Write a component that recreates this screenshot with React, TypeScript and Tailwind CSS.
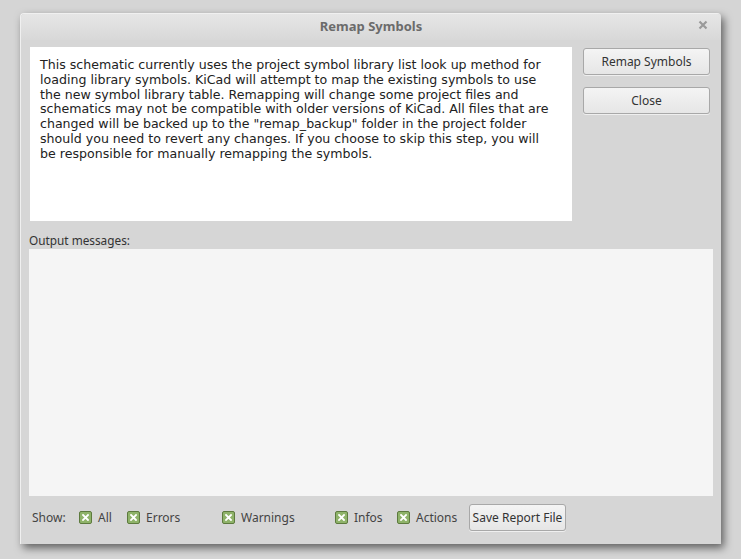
import React from "react";

const filters = [
  { label: "All", w: "w-[48px]" },
  { label: "Errors", w: "w-[95px]" },
  { label: "Warnings", w: "w-[113px]" },
  { label: "Infos", w: "w-[62px]" },
  { label: "Actions", w: "w-[72px]" },
];

const message = [
  "This schematic currently uses the project symbol library list look up method for",
  "loading library symbols. KiCad will attempt to map the existing symbols to use",
  "the new symbol library table. Remapping will change some project files and",
  "schematics may not be compatible with older versions of KiCad. All files that are",
  'changed will be backed up to the "remap_backup" folder in the project folder',
  "should you need to revert any changes. If you choose to skip this step, you will",
  "be responsible for manually remapping the symbols.",
];

function GreenCheck() {
  return (
    <span className="w-[13px] h-[13px] rounded-[2px] border border-[#5d7a3e] bg-[#8fb36a] flex items-center justify-center shrink-0">
      <svg width="7" height="7" viewBox="0 0 7 7">
        <path d="M1 1 L6 6 M6 1 L1 6" stroke="#ffffff" strokeWidth="1.8" strokeLinecap="square" />
      </svg>
    </span>
  );
}

function Button({ children, className = "" }: { children: React.ReactNode; className?: string }) {
  return (
    <button
      className={`h-[27px] rounded-[3px] border border-[#a8a8a8] bg-gradient-to-b from-[#f4f4f4] to-[#e6e6e6] text-[12px] text-[#333] shadow-[0_1px_0_rgba(255,255,255,0.6)] ${className}`}
      style={{ fontFamily: '"Noto Sans", "Open Sans", sans-serif' }}
    >
      {children}
    </button>
  );
}

export default function App() {
  const sans = { fontFamily: '"Noto Sans", "Open Sans", sans-serif' };

  return (
    <div className="w-[741px] h-[559px] bg-[#d5d5d5] pt-[13px] pl-[20px] overflow-hidden">
      <div
        className="w-[701px] h-[531px] bg-[#d6d6d6] rounded-t-[4px] flex flex-col shadow-[3px_4px_8px_rgba(0,0,0,0.55)] border-t border-l border-[#f0f0f0]"
        style={sans}
      >
        {/* title bar */}
        <div className="h-[26px] shrink-0 rounded-t-[4px] bg-gradient-to-b from-[#e6e6e6] to-[#d8d8d8] flex items-center justify-center relative">
          <span className="text-[13px] font-bold text-[#6b6b6b]">Remap Symbols</span>
          <svg className="absolute right-[13px] top-[6px]" width="10" height="10" viewBox="0 0 10 10">
            <path d="M1.5 1.5 L8.5 8.5 M8.5 1.5 L1.5 8.5" stroke="#9a9a9a" strokeWidth="2.2" />
          </svg>
        </div>

        {/* message + action buttons */}
        <div className="flex pl-[9px] pt-[7px] pr-[10px]">
          <div
            className="w-[542px] h-[174px] bg-white px-[10px] pt-[11px] text-[12.6px] leading-[14.8px] text-[#222] whitespace-nowrap overflow-hidden"
            style={{ fontFamily: '"DejaVu Sans", Verdana, sans-serif' }}
          >
            {message.map((line) => (
              <div key={line}>{line}</div>
            ))}
          </div>
          <div className="ml-[11px] flex flex-col gap-[12px] pt-[1px]">
            <Button className="w-[127px]">Remap Symbols</Button>
            <Button className="w-[127px]">Close</Button>
          </div>
        </div>

        {/* output log */}
        <div className="pl-[8px] pr-[8px] mt-[11px]">
          <div className="text-[11.8px] text-[#333] leading-[16px]">Output messages:</div>
          <div className="mt-[1px] h-[247px] bg-[#f5f5f5]" />
        </div>

        {/* filters */}
        <div className="flex items-center pl-[11px] mt-[8px] text-[12px] text-[#444]">
          <span className="w-[47px]">Show:</span>
          {filters.map((f) => (
            <label key={f.label} className={`flex items-center gap-[6px] ${f.w}`}>
              <GreenCheck />
              <span>{f.label}</span>
            </label>
          ))}
          <Button className="w-[97px]">Save Report File</Button>
        </div>
      </div>
    </div>
  );
}
